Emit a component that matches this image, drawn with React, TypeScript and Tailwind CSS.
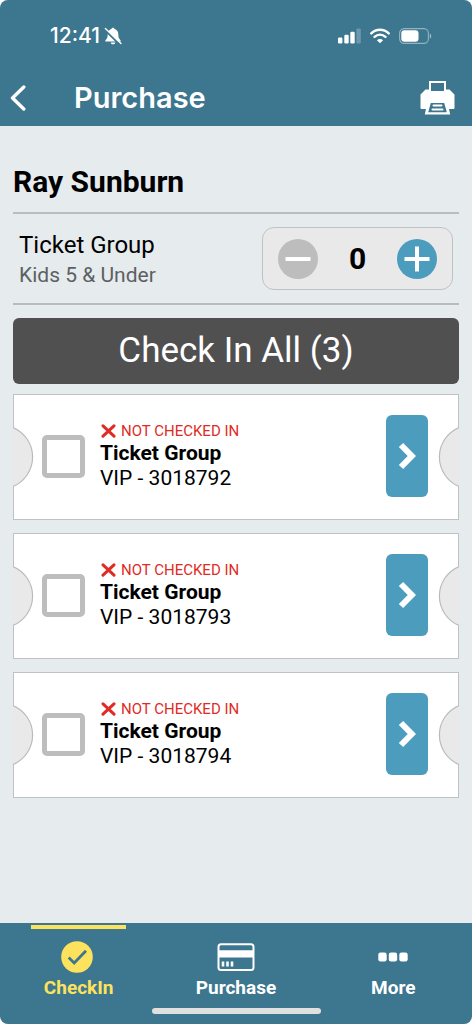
import { useState } from "react";

const tickets = [
  { id: "3018792", group: "Ticket Group", type: "VIP" },
  { id: "3018793", group: "Ticket Group", type: "VIP" },
  { id: "3018794", group: "Ticket Group", type: "VIP" },
];

function StatusBar() {
  return (
    <div className="flex items-center justify-between pt-6 pl-[50px] pr-10">
      <div className="flex items-center gap-1">
        <span className="font-['Inter',sans-serif] text-[21px] leading-6 font-medium">12:41</span>
        <svg width="18" height="18" viewBox="0 0 18 18" fill="currentColor" aria-hidden="true">
          <path d="M9 .8c.9 0 1.500.6 1.600 1.300 2.400.7 3.700 2.600 3.700 5.100 0 3.400.9 4.600 2 5.700.8.8.5 1.700-.5 1.700H2.200c-1 0-1.300-.9-.5-1.700 1.100-1.100 2-2.300 2-5.700 0-2.500 1.300-4.400 3.700-5.100C7.500 1.400 8.100.8 9 .8zM6.700 15.400h4.600c-.2 1.200-1.100 1.900-2.300 1.900s-2.100-.7-2.300-1.900z" />
          <path d="M.6 2.600 15.600 17.400" stroke="#3c768f" strokeWidth="2" />
          <path d="M1.400 1.600 17 16.400" stroke="currentColor" strokeWidth="1.400" strokeLinecap="round" />
        </svg>
      </div>
      <div className="flex items-center gap-[9px]">
        <svg width="24" height="16" viewBox="0 0 24 16" fill="currentColor" aria-hidden="true">
          <rect x="1" y="9.500" width="4.400" height="6" rx="1.200" />
          <rect x="7.300" y="6.700" width="4.400" height="8.800" rx="1.200" />
          <rect x="13.300" y="3.700" width="4.400" height="11.800" rx="1.200" />
          <rect x="19.400" y=".4" width="4.400" height="15.100" rx="1.200" opacity=".25" />
        </svg>
        <svg width="20" height="16" viewBox="0 0 20 16" fill="none" stroke="currentColor" aria-hidden="true">
          <path d="M1.300 5.400c5-4.900 12.400-4.900 17.400 0" strokeWidth="2.500" strokeLinecap="round" />
          <path d="M4.500 8.900c3.200-3 7.800-3 11 0" strokeWidth="2.400" strokeLinecap="round" />
          <path d="M10 15.300 6.900 12.200c1.800-1.700 4.400-1.700 6.200 0z" fill="currentColor" stroke="none" />
        </svg>
        <svg width="33" height="16" viewBox="0 0 33 16" aria-hidden="true">
          <rect x=".6" y=".6" width="28.800" height="14.800" rx="4.600" fill="none" stroke="currentColor" strokeWidth="1.100" opacity=".45" />
          <rect x="2.300" y="2.300" width="17.200" height="11.400" rx="3" fill="currentColor" />
          <path d="M30.800 5.400c1.900.9 1.900 4.300 0 5.200z" fill="currentColor" opacity=".5" />
        </svg>
      </div>
    </div>
  );
}

function Header() {
  return (
    <header className="h-[126px] bg-[#3c768f] text-white">
      <StatusBar />
      <div className="flex items-center pt-7 pl-[10px] pr-[17px]">
        <button type="button" aria-label="Back" className="flex h-11 w-16 items-center">
          <svg width="16" height="26" viewBox="0 0 16 26" fill="none" stroke="currentColor" strokeWidth="3.400" strokeLinecap="round" strokeLinejoin="round">
            <path d="M13.800 2 2.500 13 13.800 24" />
          </svg>
        </button>
        <h1 className="flex-1 font-['Inter',sans-serif] text-[29px] leading-9 font-semibold">Purchase</h1>
        <button type="button" aria-label="Print" className="flex h-11 items-center">
          <svg width="35" height="34" viewBox="0 0 35 34">
            <path d="M10 1h15v10H10z" fill="none" stroke="#fff" strokeWidth="2" />
            <path d="M5.500 8.500H9V12h17V8.500h3.500l5 5V27a1 1 0 0 1-1 1H29l1.200 5.500H4.800L6 28H1.500a1 1 0 0 1-1-1V13.500z" fill="#fff" />
            <path d="M10.800 22h13.400l2.600 9.200H8.200z" fill="#3c768f" />
            <path d="M13.500 24.600h8M12.500 28.400h10" stroke="#fff" strokeWidth="2" strokeLinecap="round" />
          </svg>
        </button>
      </div>
    </header>
  );
}

function Notch({ side }: { side: "left" | "right" }) {
  return (
    <svg
      width="21"
      height="62"
      viewBox="0 0 21 62"
      aria-hidden="true"
      className={`absolute top-[31px] ${side === "left" ? "-left-px" : "-right-px rotate-180"}`}
    >
      <path d="M0 1.500A32 32 0 0 1 0 60.500z" fill="#e9e9e9" />
      <path d="M0 1.500A32 32 0 0 1 0 60.500" fill="none" stroke="#b9bcbf" strokeWidth="1.200" />
    </svg>
  );
}

export default function App() {
  const [count, setCount] = useState(0);
  const [selected, setSelected] = useState<string[]>([]);

  const toggle = (id: string) =>
    setSelected((prev) => (prev.includes(id) ? prev.filter((s) => s !== id) : [...prev, id]));

  return (
    <div className="min-h-screen bg-white">
      <div className="flex min-h-screen flex-col overflow-hidden rounded-lg bg-[#e6ebee] font-['Roboto',sans-serif] text-black">
        <Header />

        <main className="flex-1 px-[13px]">
          <h2 className="pt-9 pb-[10px] text-[30px] leading-10 font-bold">Ray Sunburn</h2>

          {/* Quantity */}
          <section className="flex items-center justify-between border-y-2 border-[#b9bdc0] px-[6px] py-[13px]">
            <div>
              <p className="text-[24px] leading-8">Ticket Group</p>
              <p className="text-[21px] leading-7 text-[#5d6063]">Kids 5 &amp; Under</p>
            </div>
            <div className="flex h-[63px] w-[191px] items-center justify-between rounded-xl border border-[#bfc2c5] bg-[#e9e9e9] px-[15px]">
              <button
                type="button"
                aria-label="Remove one"
                onClick={() => setCount((c) => Math.max(0, c - 1))}
                className="flex size-10 items-center justify-center rounded-full bg-[#bdbdbd]"
              >
                <svg width="26" height="26" viewBox="0 0 26 26" stroke="#fff" strokeWidth="4">
                  <path d="M.5 13h25" />
                </svg>
              </button>
              <output className="text-[30px] leading-10 font-bold">{count}</output>
              <button
                type="button"
                aria-label="Add one"
                onClick={() => setCount((c) => c + 1)}
                className="flex size-10 items-center justify-center rounded-full bg-[#4c9dbd]"
              >
                <svg width="26" height="26" viewBox="0 0 26 26" stroke="#fff" strokeWidth="4">
                  <path d="M.5 13h25M13 .5v25" />
                </svg>
              </button>
            </div>
          </section>

          <button
            type="button"
            onClick={() => setSelected(tickets.map((t) => t.id))}
            className="mt-[13px] h-[66px] w-full rounded-md bg-[#505050] text-[35px] leading-10 text-white"
          >
            Check In All ({tickets.length})
          </button>

          {/* Tickets */}
          <ul className="mt-[10px] flex flex-col gap-[13px]">
            {tickets.map((t) => (
              <li key={t.id} className="relative flex h-[126px] items-center border border-[#bfc2c5] bg-white pr-[30px] pb-[2px] pl-7">
                <Notch side="left" />
                <Notch side="right" />
                <input
                  id={t.id}
                  type="checkbox"
                  checked={selected.includes(t.id)}
                  onChange={() => toggle(t.id)}
                  className="size-[43px] appearance-none rounded-[5px] border-5 border-[#bdbdbd] bg-white checked:bg-[#4c9dbd]"
                />
                <label htmlFor={t.id} className="ml-[15px] flex-1">
                  <span className="flex items-center gap-[5px] text-[15px] leading-5 text-[#e02b25]">
                    <svg width="16" height="14" viewBox="0 0 16 14" fill="none" stroke="currentColor" strokeWidth="3" strokeLinecap="round" aria-hidden="true">
                      <path d="M3 1.800 14 12.200M14 1.800 3 12.200" />
                    </svg>
                    NOT CHECKED IN
                  </span>
                  <span className="block text-[21px] leading-[25px] font-bold">{t.group}</span>
                  <span className="block text-[21px] leading-[25px]">
                    {t.type} - {t.id}
                  </span>
                </label>
                <button
                  type="button"
                  aria-label={`Open ${t.id}`}
                  className="flex h-[82px] w-[42px] items-center justify-center rounded-md bg-[#4c9dbd]"
                >
                  <svg width="18" height="28" viewBox="0 0 18 28" fill="none" stroke="#fff" strokeWidth="6">
                    <path d="M3 3 13.800 14 3 25" />
                  </svg>
                </button>
              </li>
            ))}
          </ul>
        </main>

        <nav className="flex flex-col bg-[#3c768f] text-[19px] leading-6 font-bold text-white">
          <div className="grid grid-cols-3">
            <a href="#checkin" aria-current="page" className="flex flex-col items-center text-[#fde25d]">
              <span className="mt-[2px] h-1 w-3/5 bg-[#fde25d]" />
              <svg width="36" height="32" viewBox="0 0 36 32" className="mt-3" aria-hidden="true">
                <circle cx="16" cy="16" r="15.800" fill="currentColor" />
                <path d="M7.700 16.500 13.200 22 25 9.800" fill="none" stroke="#3c768f" strokeWidth="2.800" />
              </svg>
              <span className="mt-[3px]">CheckIn</span>
            </a>
            <a href="#purchase" className="flex flex-col items-center pt-[18px]">
              <svg width="38" height="32" viewBox="0 0 38 32" aria-hidden="true">
                <rect x="1.500" y="3.200" width="35" height="25.800" rx="2.500" fill="none" stroke="currentColor" strokeWidth="2" />
                <path d="M1 9.200h36v7.400H1z" fill="currentColor" />
                <path d="M6 20.500v5M10.500 20.500v5M15 20.500v5" stroke="currentColor" strokeWidth="2.600" />
              </svg>
              <span className="mt-[3px]">Purchase</span>
            </a>
            <a href="#more" className="flex flex-col items-center pt-[18px]">
              <svg width="30" height="32" viewBox="0 0 30 32" fill="currentColor" aria-hidden="true">
                <rect x=".3" y="11.600" width="8.400" height="8.800" rx="2.200" />
                <rect x="10.800" y="11.600" width="8.400" height="8.800" rx="2.200" />
                <rect x="21.300" y="11.600" width="8.400" height="8.800" rx="2.200" />
              </svg>
              <span className="mt-[3px]">More</span>
            </a>
          </div>
          <div className="mt-2 mb-[10px] h-[6px] w-[169px] self-center rounded-full bg-[#e0e0e0]" />
        </nav>
      </div>
    </div>
  );
}
